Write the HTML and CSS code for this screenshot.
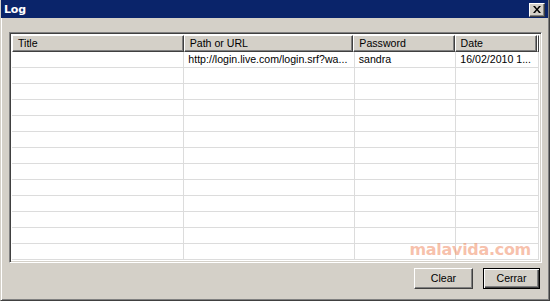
FILE: index.html
```html
<!DOCTYPE html>
<html>
<head>
<meta charset="utf-8">
<link rel="stylesheet" href="styles.css">
</head>
<body>
<div class="window">
  <div class="titlebar">
    <span class="title">Log</span>
    <div class="close">
      <svg width="8" height="7" viewBox="0 0 8 7"><path d="M0 0h2l2 2.5L6 0h2L5 3.5 8 7H6L4 4.5 2 7H0l3-3.5z" fill="#000"/></svg>
    </div>
  </div>
  <div class="content">
    <div class="list">
      <div class="header">
        <div class="hcell c1">Title</div>
        <div class="hcell c2">Path or URL</div>
        <div class="hcell c3">Password</div>
        <div class="hcell c4">Date</div>
        <div class="hfill"></div>
      </div>
      <div class="rows">
        <div class="row"><div class="cell c1"></div><div class="cell c2">http://login.live.com/login.srf?wa...</div><div class="cell c3">sandra</div><div class="cell c4">16/02/2010 1...</div></div>
        <div class="row"><div class="cell c1"></div><div class="cell c2"></div><div class="cell c3"></div><div class="cell c4"></div></div>
        <div class="row"><div class="cell c1"></div><div class="cell c2"></div><div class="cell c3"></div><div class="cell c4"></div></div>
        <div class="row"><div class="cell c1"></div><div class="cell c2"></div><div class="cell c3"></div><div class="cell c4"></div></div>
        <div class="row"><div class="cell c1"></div><div class="cell c2"></div><div class="cell c3"></div><div class="cell c4"></div></div>
        <div class="row"><div class="cell c1"></div><div class="cell c2"></div><div class="cell c3"></div><div class="cell c4"></div></div>
        <div class="row"><div class="cell c1"></div><div class="cell c2"></div><div class="cell c3"></div><div class="cell c4"></div></div>
        <div class="row"><div class="cell c1"></div><div class="cell c2"></div><div class="cell c3"></div><div class="cell c4"></div></div>
        <div class="row"><div class="cell c1"></div><div class="cell c2"></div><div class="cell c3"></div><div class="cell c4"></div></div>
        <div class="row"><div class="cell c1"></div><div class="cell c2"></div><div class="cell c3"></div><div class="cell c4"></div></div>
        <div class="row"><div class="cell c1"></div><div class="cell c2"></div><div class="cell c3"></div><div class="cell c4"></div></div>
        <div class="row"><div class="cell c1"></div><div class="cell c2"></div><div class="cell c3"></div><div class="cell c4"></div></div>
        <div class="row"><div class="cell c1"></div><div class="cell c2"></div><div class="cell c3"></div><div class="cell c4"></div></div>
      </div>
      <div class="watermark">malavida.com</div>
    </div>
    <div class="buttons">
      <div class="btn">Clear</div>
      <div class="btn default">Cerrar</div>
    </div>
  </div>
</div>
</body>
</html>
```
FILE: styles.css
```css
* { box-sizing: border-box; }
html, body { margin: 0; padding: 0; }
body {
  width: 550px;
  height: 301px;
  overflow: hidden;
  font-family: "Liberation Sans", Arial, sans-serif;
  font-size: 10.6px;
  color: #000;
}
.window {
  width: 550px;
  height: 301px;
  background: #d4d0c8;
  border-left: 1px solid #d4d0c8;
  border-right: 1px solid #404040;
  border-bottom: 1px solid #404040;
  box-shadow: inset 1px 0 #fff, inset -1px -1px #808080;
  display: flex;
  flex-direction: column;
}
.titlebar {
  height: 18px;
  margin-right: 1px;
  background: #0a246a;
  display: flex;
  align-items: center;
  justify-content: space-between;
  padding: 0 3px 0 3px;
}
.title {
  color: #fff;
  font-weight: bold;
  font-size: 11px;
  font-family: "DejaVu Sans", Verdana, sans-serif;
  letter-spacing: -0.2px;
}
.close {
  width: 16px;
  height: 14px;
  background: #d4d0c8;
  border-top: 1px solid #fff;
  border-left: 1px solid #fff;
  border-right: 1px solid #404040;
  border-bottom: 1px solid #404040;
  box-shadow: inset -1px -1px #808080;
  display: flex;
  align-items: center;
  justify-content: center;
  margin-top: 1px;
}
.close svg { display: block; margin: 0 1px 1px 0; }
.content {
  flex: 1;
  display: flex;
  flex-direction: column;
  padding: 14px 7px 0 8px;
}
.list {
  position: relative;
  height: 231px;
  background: #fff;
  border-top: 1px solid #808080;
  border-left: 1px solid #808080;
  border-right: 1px solid #fff;
  border-bottom: 1px solid #fff;
  box-shadow: inset 1px 1px #404040, inset -1px -1px #d4d0c8;
  padding: 2px 2px 2px 2px;
  overflow: hidden;
}
.header {
  display: flex;
  height: 17px;
}
.hcell, .hfill {
  height: 17px;
  background: #d4d0c8;
  border-top: 1px solid #fff;
  border-left: 1px solid #fff;
  border-right: 1px solid #404040;
  border-bottom: 1px solid #404040;
  box-shadow: inset -1px -1px #808080;
  padding: 1px 0 0 5px;
  line-height: 13px;
  white-space: nowrap;
}
.hfill { flex: 1; padding: 0; }
.c1 { width: 173px; }
.c2 { width: 171px; }
.c3 { width: 102px; }
.c4 { width: 83px; }
.rows { display: flex; flex-direction: column; }
.row { display: flex; height: 16px; }
.cell {
  height: 16px;
  border-right: 1px solid #dcdcdc;
  border-bottom: 1px solid #dcdcdc;
  padding: 2px 0 0 4px;
  line-height: 12px;
  white-space: nowrap;
  overflow: hidden;
}
.row:first-child .cell { padding-top: 1px; }
.watermark {
  position: absolute;
  right: 10px;
  bottom: 3px;
  font-family: "DejaVu Sans", Verdana, sans-serif;
  font-weight: bold;
  font-size: 16px;
  letter-spacing: -0.3px;
  color: rgba(240, 140, 100, 0.55);
}
.buttons {
  display: flex;
  justify-content: flex-end;
  gap: 10px;
  padding: 5px 2px 0 0;
}
.btn {
  width: 59px;
  height: 21px;
  background: #d4d0c8;
  border-top: 1px solid #fff;
  border-left: 1px solid #fff;
  border-right: 1px solid #404040;
  border-bottom: 1px solid #404040;
  box-shadow: inset -1px -1px #808080;
  display: flex;
  align-items: center;
  justify-content: center;
  padding-bottom: 1px;
}
.btn.default {
  width: 57px;
  border: 1px solid #000;
  box-shadow: inset 1px 1px #fff, inset -1px -1px #404040, inset -2px -2px #808080;
}
```
